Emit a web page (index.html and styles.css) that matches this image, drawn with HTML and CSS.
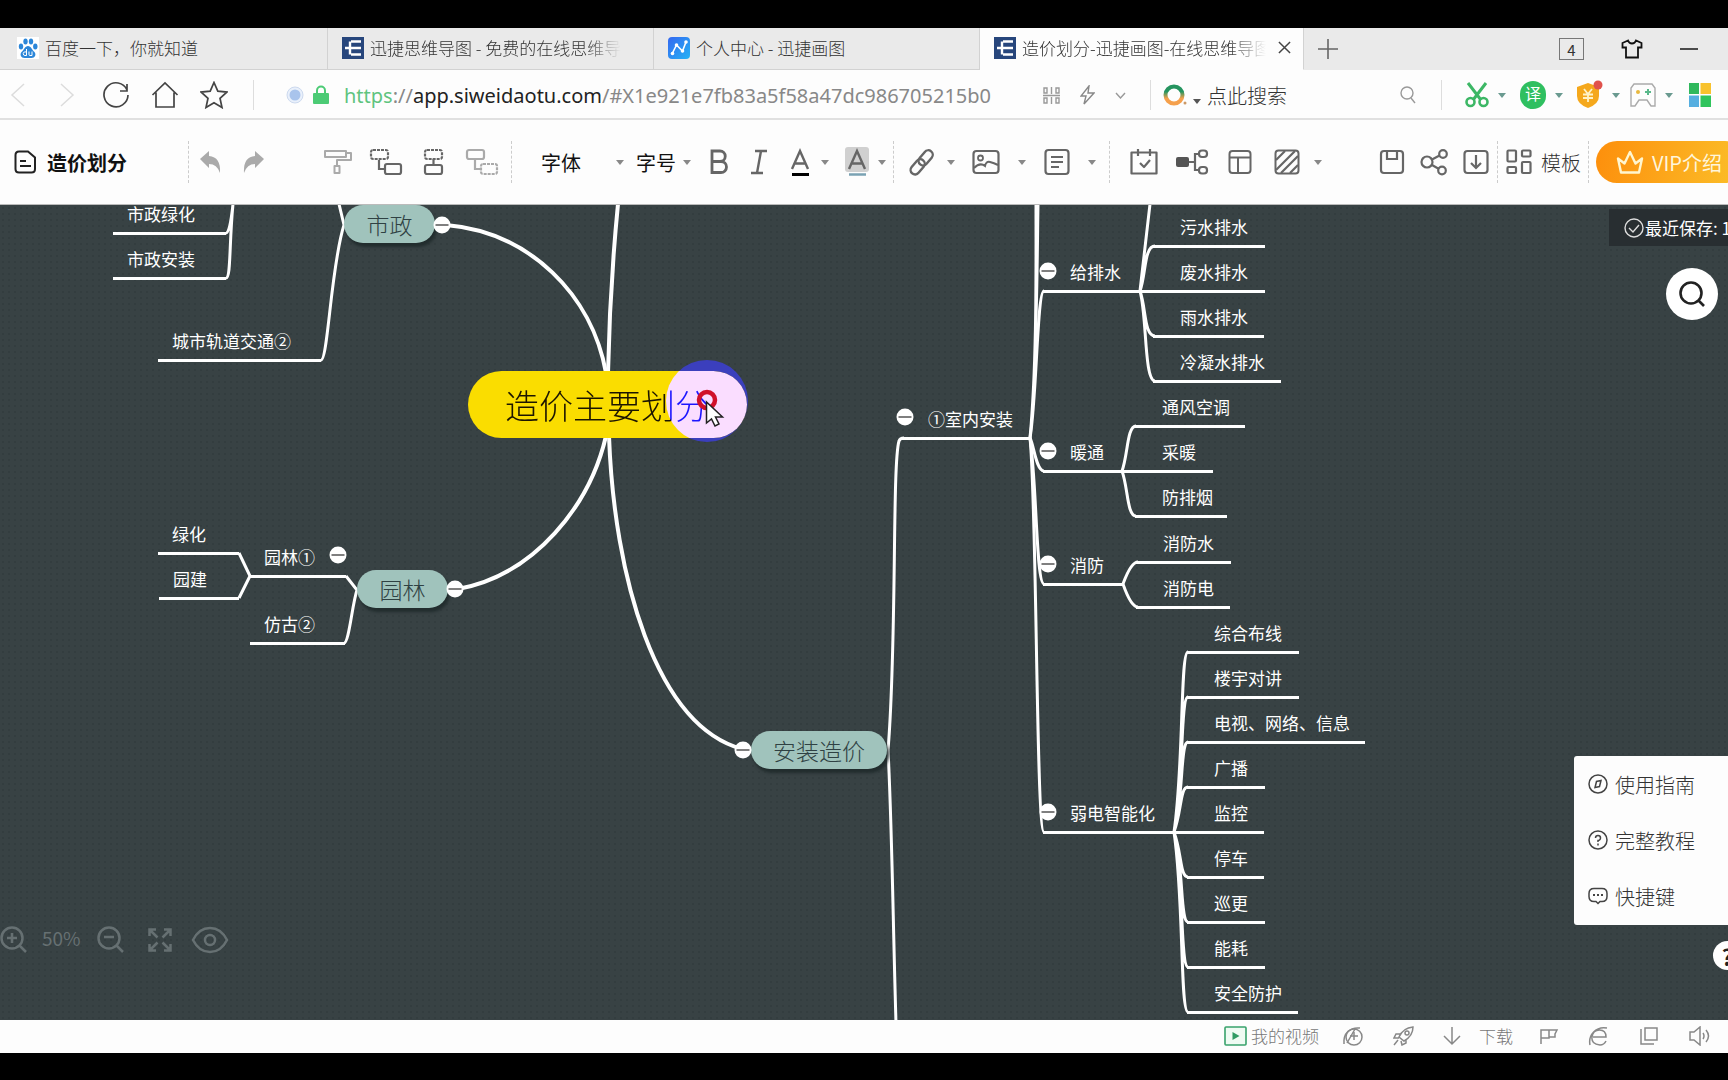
FILE: index.html
```html
<!DOCTYPE html>
<html lang="zh-CN">
<head>
<meta charset="utf-8">
<title>造价划分-迅捷画图-在线思维导图</title>
<link rel="stylesheet" href="styles.css">
</head>
<body>
<svg class="defs" aria-hidden="true">
  <symbol id="caret" viewBox="0 0 8 5"><path d="M0 0h8L4 5z" fill="currentColor"/></symbol>
  <symbol id="tree" viewBox="0 0 22 22"><rect width="22" height="22" fill="#27467c"/><path d="M9 4.500h10M3 11h16M9 17.500h10M8 4.500v13" stroke="#fff" stroke-width="2.400" fill="none"/></symbol>
  <symbol id="minus" viewBox="0 0 18 18"><circle cx="9" cy="9" r="8.500" fill="#fff"/><path d="M2.500 9h13" stroke="#555" stroke-width="1.500"/></symbol>
</svg>

<header class="tabs">
  <a class="tab" href="#baidu">
    <svg class="favicon" viewBox="0 0 22 22"><rect width="22" height="22" fill="#fff"/><g fill="#2b86d9"><ellipse cx="4" cy="9.500" rx="2.200" ry="3"/><ellipse cx="8.500" cy="4.500" rx="2.200" ry="3"/><ellipse cx="14" cy="4.500" rx="2.200" ry="3"/><ellipse cx="18.300" cy="9.500" rx="2.200" ry="3"/><path d="M11 9c3 0 4 4 6.500 6 2 2.500.500 6-3 6h-7c-3.500 0-5-3.500-3-6C7 13 8 9 11 9z"/></g><path d="M9.500 12v6.500H8a1.800 1.800 0 010-3.600h1.500M12 14.500v3q0 1 1 1h2v-4" stroke="#fff" fill="none"/></svg>
    <span class="tab-label">百度一下，你就知道</span>
  </a>
  <a class="tab" href="#mind"><svg class="favicon"><use href="#tree"/></svg><span class="tab-label fade">迅捷思维导图 - 免费的在线思维导图</span></a>
  <a class="tab" href="#center">
    <svg class="favicon" viewBox="0 0 22 22"><defs><linearGradient id="fg" x1="0" y1="0" x2="1" y2="1"><stop stop-color="#3568f0"/><stop offset="1" stop-color="#25b3f5"/></linearGradient></defs><rect width="22" height="22" rx="4" fill="url(#fg)"/><path d="M4 17l4.500-9 6 6L18 5" stroke="#fff" stroke-width="1.600" fill="none"/><g fill="#fff"><circle cx="4.500" cy="16.500" r="1.800"/><circle cx="8.500" cy="8" r="1.800"/><circle cx="14.500" cy="14" r="1.800"/><circle cx="18" cy="5" r="1.800"/></g></svg>
    <span class="tab-label">个人中心 - 迅捷画图</span>
  </a>
  <a class="tab active" href="#current"><svg class="favicon"><use href="#tree"/></svg><span class="tab-label fade">造价划分-迅捷画图-在线思维导图</span>
    <svg class="close" viewBox="0 0 14 14"><path d="M1 1l12 12M13 1L1 13" stroke="#444" stroke-width="1.600"/></svg></a>
  <button class="new-tab" aria-label="新标签"><svg width="20" height="20" viewBox="0 0 20 20"><path d="M10 0v20M0 10h20" stroke="#666" stroke-width="1.600"/></svg></button>
  <div class="window-tools">
    <button class="count">4</button>
    <button aria-label="皮肤"><svg width="22" height="20" viewBox="0 0 22 20"><path d="M7 1.500L1.500 4v4.500H5V18.500h12V8.500h3.500V4L15 1.500q-1 3-4 3t-4-3z" fill="none" stroke="#111" stroke-width="1.800"/></svg></button>
    <button aria-label="最小化"><svg width="18" height="4" viewBox="0 0 18 4"><path d="M0 2h18" stroke="#222" stroke-width="1.600"/></svg></button>
  </div>
</header>

<div class="address">
  <nav class="nav">
    <button aria-label="后退"><svg width="18" height="26" viewBox="0 0 18 26"><path d="M15 2L3 13l12 11" fill="none" stroke="#dcdcdc" stroke-width="1.500"/></svg></button>
    <button aria-label="前进"><svg width="18" height="26" viewBox="0 0 18 26"><path d="M3 2l12 11L3 24" fill="none" stroke="#dcdcdc" stroke-width="1.500"/></svg></button>
    <button aria-label="刷新"><svg width="28" height="28" viewBox="0 0 28 28"><path d="M25 9A12 12 0 1 0 26 14M25 3v7h-7" fill="none" stroke="#444" stroke-width="1.700"/></svg></button>
    <button aria-label="主页"><svg width="28" height="28" viewBox="0 0 28 28"><path d="M1.500 14L14 2l12.500 12M5 11.500V26h18V11.500" fill="none" stroke="#444" stroke-width="1.700"/></svg></button>
    <button aria-label="收藏"><svg width="28" height="28" viewBox="0 0 28 28"><path d="M14 1.500l3.800 8.700 9 .900-6.800 6.200 2 9.200-8-4.800-8 4.800 2-9.200L1.200 11.100l9-.900z" fill="none" stroke="#444" stroke-width="1.700"/></svg></button>
  </nav>
  <span class="rule"></span>
  <div class="url">
    <svg width="18" height="18" viewBox="0 0 18 18"><circle cx="9" cy="9" r="8" fill="#e9f0fb" stroke="#ccd9ee"/><circle cx="9" cy="9" r="5.500" fill="#a9c4ec"/></svg>
    <svg width="16" height="20" viewBox="0 0 16 20"><path d="M4 9V5.500a4 4 0 018 0V9" fill="none" stroke="#4ccb75" stroke-width="2"/><rect y="8" width="16" height="11" rx="1" fill="#4ccb75"/></svg>
    <span class="url-text"><span class="scheme">https</span>://<span class="host">app.siweidaotu.com</span>/#X1e921e7fb83a5f58a47dc986705215b0</span>
  </div>
  <div class="url-tools">
    <svg width="17" height="17" viewBox="0 0 17 17"><path d="M1 1h3v5H1zM8.500 0v7M13 1h3v5h-3zM0 8.500h17M1 11h3v5H1zM8.500 10v7M13 11h3v5h-3z" fill="none" stroke="#999" stroke-width="1.400"/></svg>
    <svg width="15" height="20" viewBox="0 0 15 20"><path d="M9 1L1 11h5l-2 8 10-11H8z" fill="none" stroke="#888" stroke-width="1.400"/></svg>
    <svg width="11" height="7" viewBox="0 0 11 7"><path d="M1 1l4.500 5L10 1" fill="none" stroke="#999" stroke-width="1.400"/></svg>
  </div>
  <span class="rule"></span>
  <form class="search">
    <svg width="24" height="22" viewBox="0 0 24 22"><defs><linearGradient id="lg" x2="0" y2="1"><stop offset=".3" stop-color="#25945f"/><stop offset=".7" stop-color="#f5a04c"/></linearGradient></defs><circle cx="11" cy="11" r="8.500" fill="none" stroke="url(#lg)" stroke-width="4"/><circle cx="22" cy="19" r="1.500" fill="#c96"/></svg>
    <svg class="caret low"><use href="#caret"/></svg>
    <input type="text" placeholder="点此搜索" aria-label="搜索">
    <svg width="16" height="18" viewBox="0 0 16 18"><circle cx="7" cy="7" r="6" fill="none" stroke="#999" stroke-width="1.400"/><path d="M11 12l4 5" stroke="#999" stroke-width="1.400"/></svg>
  </form>
  <span class="rule"></span>
  <div class="extensions">
    <button aria-label="截图"><svg width="24" height="26" viewBox="0 0 24 26"><path d="M3 1l13 17M21 1L8 18" stroke="#3cb765" stroke-width="3"/><circle cx="5.500" cy="20" r="4" fill="none" stroke="#3cb765" stroke-width="2.600"/><circle cx="18.500" cy="20" r="4" fill="none" stroke="#3cb765" stroke-width="2.600"/></svg><svg class="caret"><use href="#caret"/></svg></button>
    <button><span class="translate">译</span><svg class="caret"><use href="#caret"/></svg></button>
    <button aria-label="优惠"><svg width="28" height="30" viewBox="0 0 28 30"><path d="M13 3l11 4v9q0 8-11 12Q2 24 2 16V7z" fill="#f5a81c"/><path d="M9 9l4 5 4-5M8 14.500h10M8 18h10M13 14v8" stroke="#fff3c8" stroke-width="1.800" fill="none"/><circle cx="23" cy="5" r="4.500" fill="#e0524c"/></svg><svg class="caret"><use href="#caret"/></svg></button>
    <button aria-label="游戏"><svg width="26" height="24" viewBox="0 0 26 24"><path d="M4 1h18l3 4v18h-4l-4-6H9l-4 6H1V5z" fill="none" stroke="#aaa" stroke-width="1.400"/><circle cx="8" cy="9" r="2" fill="#e8b83e"/><path d="M18 6v6M15 9h6" stroke="#5ab88b" stroke-width="2"/></svg><svg class="caret"><use href="#caret"/></svg></button>
    <button aria-label="应用"><svg width="22" height="24" viewBox="0 0 22 24"><path fill="#2fb85c" d="M0 0h10v11H0z"/><path fill="#f8c22d" d="M11.500 0H22v11H11.500z"/><path fill="#55aee0" d="M0 12.500h10V24H0z"/><path fill="#2fc45c" d="M11.500 12.500H22V24H11.500z"/></svg></button>
  </div>
</div>

<div class="toolbar">
  <div class="group title">
    <svg width="23" height="24" viewBox="0 0 23 24"><path d="M5 1.500h9l7 6V19q0 3.500-3.500 3.500H5q-3.500 0-3.500-3.500V5Q1.500 1.500 5 1.500zM6 11h6M6 16h11" fill="none" stroke="#222" stroke-width="2"/></svg>
    <strong>造价划分</strong>
  </div>
  <div class="group history">
    <button aria-label="撤销"><svg width="24" height="24" viewBox="0 0 24 24"><path d="M1 9l9-8v5q12 1 11 17-3-9-11-9v4z" fill="#aaa"/></svg></button>
    <button aria-label="重做"><svg width="24" height="24" viewBox="0 0 24 24"><path d="M23 9l-9-8v5Q2 7 3 23q3-9 11-9v4z" fill="#aaa"/></svg></button>
  </div>
  <div class="group topics">
    <button aria-label="格式刷"><svg width="30" height="26" viewBox="0 0 30 26"><path d="M2 2h21v6H2zM23 4h5v7H14v5M11.500 17h5v7h-5z" fill="none" stroke="#aaa" stroke-width="2" stroke-linejoin="round"/></svg></button>
    <button aria-label="下级主题"><svg width="34" height="28" viewBox="0 0 34 28"><rect x="2" y="2" width="17" height="9" rx="2" fill="none" stroke="#666" stroke-width="2.200" stroke-dasharray="3 1"/><path d="M10 12v9h6" fill="none" stroke="#666" stroke-width="2.200"/><rect x="16" y="16" width="16" height="10" rx="2" fill="none" stroke="#666" stroke-width="2.200"/></svg></button>
    <button aria-label="同级主题"><svg width="22" height="28" viewBox="0 0 22 28"><rect x="2" y="2" width="17" height="9" rx="2" fill="none" stroke="#666" stroke-width="2.200" stroke-dasharray="3 1"/><path d="M10.500 11v6" stroke="#666" stroke-width="2.200"/><rect x="2" y="17" width="17" height="9" rx="2" fill="none" stroke="#666" stroke-width="2.200"/></svg></button>
    <button aria-label="上级主题"><svg width="34" height="28" viewBox="0 0 34 28"><rect x="2" y="2" width="17" height="9" rx="2" fill="none" stroke="#aaa" stroke-width="2.200"/><path d="M10 12v9h6" fill="none" stroke="#aaa" stroke-width="2.200"/><rect x="16" y="16" width="16" height="10" rx="2" fill="none" stroke="#aaa" stroke-width="2.200" stroke-dasharray="3 1"/></svg></button>
  </div>
  <div class="group type">
    <label class="pick font"><select aria-label="字体"><option>字体</option></select><svg class="caret"><use href="#caret"/></svg></label>
    <label class="pick"><select aria-label="字号"><option>字号</option></select><svg class="caret"><use href="#caret"/></svg></label>
    <button class="narrow" aria-label="加粗"><svg width="20" height="26" viewBox="0 0 20 26"><path d="M3 2h8a5 5 0 010 10.500H3zM3 12.500h9a5.500 5.500 0 010 11H3z" fill="none" stroke="#666" stroke-width="2.800"/></svg></button>
    <button class="narrow" aria-label="斜体"><svg width="18" height="26" viewBox="0 0 18 26"><path d="M5 2h12M1 24h12M11 2L7 24" fill="none" stroke="#666" stroke-width="2.400"/></svg></button>
    <button class="split" aria-label="文字颜色"><svg class="glyph" viewBox="0 0 26 30"><path d="M5 22L13 4l8 18M8 16.500h10" fill="none" stroke="#666" stroke-width="2.400"/><path d="M5 27.500h17" stroke="#000" stroke-width="3"/></svg><svg class="caret"><use href="#caret"/></svg></button>
    <button class="split" aria-label="背景颜色"><svg class="glyph" viewBox="0 0 26 30"><rect x="1" width="24" height="25" rx="3" fill="#d0d0d0"/><path d="M5 22L13 4l8 18M8 16.500h10" fill="none" stroke="#666" stroke-width="2.400"/><path d="M5 27.500h17" stroke="#7aa2b3" stroke-width="2.500"/></svg><svg class="caret"><use href="#caret"/></svg></button>
  </div>
  <div class="group insert">
    <button class="split" aria-label="链接"><svg width="28" height="28" viewBox="0 0 28 28"><g fill="none" stroke="#666" stroke-width="2.400"><rect x="9" y="5" width="17" height="9" rx="4.500" transform="rotate(-50 18 9.500)"/><rect x="1" y="14" width="17" height="9" rx="4.500" transform="rotate(-50 10 18.500)"/></g></svg><svg class="caret"><use href="#caret"/></svg></button>
    <button class="split wide" aria-label="图片"><svg width="28" height="26" viewBox="0 0 28 26"><rect x="1.500" y="2" width="25" height="22" rx="3" fill="none" stroke="#666" stroke-width="2.200"/><circle cx="8.500" cy="9" r="2.500" fill="none" stroke="#666" stroke-width="1.800"/><path d="M2 19q6-6 11-2 1-5 5-4t8 3" fill="none" stroke="#666" stroke-width="2"/></svg><svg class="caret"><use href="#caret"/></svg></button>
    <button class="split wide" aria-label="备注"><svg width="26" height="28" viewBox="0 0 26 28"><rect x="1.500" y="2" width="23" height="24" rx="3" fill="none" stroke="#666" stroke-width="2.200"/><path d="M7 9h12M7 14h12M7 19h8" stroke="#666" stroke-width="2.200"/></svg><svg class="caret"><use href="#caret"/></svg></button>
  </div>
  <div class="group extra">
    <button aria-label="任务"><svg width="28" height="28" viewBox="0 0 28 28"><path d="M1.500 4.500h25v21h-25zM8 1v7M20 1v7M10 15l4 4 6-7" fill="none" stroke="#666" stroke-width="2.200" stroke-linejoin="round"/></svg></button>
    <button aria-label="概要"><svg width="34" height="28" viewBox="0 0 34 28"><rect x="1" y="9" width="13" height="10" rx="2" fill="#555"/><path d="M14 14h6M24 6h-4v16h4" fill="none" stroke="#666" stroke-width="2.200"/><rect x="24" y="2.500" width="8" height="6.500" rx="3" fill="none" stroke="#666" stroke-width="2.200"/><rect x="24" y="19" width="8" height="6.500" rx="3" fill="none" stroke="#666" stroke-width="2.200"/></svg></button>
    <button aria-label="布局"><svg width="24" height="26" viewBox="0 0 24 26"><rect x="1.500" y="2" width="21" height="22" rx="3" fill="none" stroke="#666" stroke-width="2"/><path d="M2 8.500h20M10 9v15" stroke="#666" stroke-width="2"/></svg></button>
    <button class="split hatch" aria-label="样式"><svg width="26" height="26" viewBox="0 0 26 26"><rect x="1.500" y="1.500" width="23" height="23" rx="3" fill="none" stroke="#666" stroke-width="2"/><path d="M2 11L11 2M2 21L21 2M7 24L24 7M16 24l8-8" stroke="#666" stroke-width="2.200"/></svg><svg class="caret"><use href="#caret"/></svg></button>
  </div>
  <div class="group file">
    <button aria-label="保存"><svg width="26" height="28" viewBox="0 0 26 28"><rect x="2" y="3" width="22" height="22" rx="3" fill="none" stroke="#666" stroke-width="2.200"/><path d="M8 3v8h10V3" fill="none" stroke="#666" stroke-width="2.200"/></svg></button>
    <button aria-label="分享"><svg width="28" height="28" viewBox="0 0 28 28"><g fill="none" stroke="#666" stroke-width="2.200"><circle cx="7" cy="14" r="5.500"/><circle cx="23" cy="6" r="3.800"/><circle cx="22" cy="22.500" r="3.800"/><path d="M12 11.500l7.500-4M12 17l7 4"/></g></svg></button>
    <button aria-label="下载"><svg width="26" height="28" viewBox="0 0 26 28"><rect x="1.500" y="3" width="23" height="22" rx="3" fill="none" stroke="#666" stroke-width="2.200"/><path d="M13 7v13M8 15l5 5 5-5" fill="none" stroke="#666" stroke-width="2.200"/></svg></button>
  </div>
  <button class="template"><svg width="26" height="26" viewBox="0 0 26 26"><g fill="none" stroke="#666" stroke-width="2.200"><rect x="1.500" y="1.500" width="8.500" height="11" rx="1"/><rect x="16" y="1.500" width="8.500" height="6" rx="1"/><rect x="1.500" y="18" width="8.500" height="6" rx="1"/><rect x="16" y="13" width="8.500" height="11" rx="1"/></g></svg>模板</button>
  <button class="vip"><svg width="28" height="26" viewBox="0 0 28 26"><path d="M5 23.500h18l3-14-6.500 5L14 3 8.500 14.500 2 9.500z" fill="none" stroke="#fff6d0" stroke-width="2.400" stroke-linejoin="round"/></svg>VIP介绍</button>
</div>

<main class="canvas">
  <svg class="links" width="1400" height="820" aria-hidden="true">
    <g class="thick">
      <path d="M446 20C530 27 592 90 606 168"/>
      <path d="M618-1C612 60 609 120 608 168"/>
      <path d="M606 231C590 300 535 370 458 384"/>
      <path d="M609 231C614 370 655 520 742 544"/>
    </g>
    <g class="thin">
      <path d="M226 28Q230 28 233-1M226 73C231 73 229 40 233-1"/>
      <path d="M321 155C328 155 331 60 344 20L339-1"/>
      <path d="M239 348L250 371L239 393"/>
      <path d="M346 371L357 385C352 400 349 438 344 438"/>
      <path d="M888 545C897 440 892 260 899 236Q900 233 904 233"/>
      <path d="M888 545C892 620 893 720 896 818"/>
      <path d="M1030 233C1037 160 1036 60 1036-1M1030 233C1037 160 1037 60 1038-1"/>
      <path d="M1030 233C1037 190 1037 86 1044 86"/>
      <path d="M1030 233C1034 240 1036 266 1044 266"/>
      <path d="M1030 233C1037 280 1036 379 1044 379"/>
      <path d="M1030 233C1037 300 1036 627 1044 627"/>
      <path d="M1140 86C1146 70 1144 41 1155 41M1140 86L1150-1M1140 86C1146 102 1144 131 1155 131M1140 86C1147 110 1144 176 1155 176"/>
      <path d="M1122 266C1128 250 1127 221 1136 221M1122 266C1128 282 1127 311 1136 311"/>
      <path d="M1123 379Q1131 357 1138 357M1123 379Q1131 402 1138 402"/>
      <path d="M1174 627C1184 560 1180 447 1188 447M1174 627C1184 580 1180 492 1188 492M1174 627C1184 590 1180 537 1188 537M1174 627C1182 605 1180 582 1188 582M1174 627C1182 649 1180 672 1188 672M1174 627C1184 664 1180 717 1188 717M1174 627C1184 674 1180 762 1188 762M1174 627C1184 694 1180 807 1188 807"/>
    </g>
  </svg>

  <div class="node left" style="left:113px;top:-2px;width:113px">市政绿化</div>
  <div class="node left" style="left:113px;top:43px;width:113px">市政安装</div>
  <div class="node left" style="left:158px;top:125px;width:163px">城市轨道交通②</div>
  <div class="node left" style="left:158px;top:318px;width:81px">绿化</div>
  <div class="node left" style="left:159px;top:363px;width:80px">园建</div>
  <div class="node left" style="left:250px;top:341px;width:96px">园林①</div>
  <div class="node left" style="left:250px;top:408px;width:95px">仿古②</div>

  <div class="node" style="left:901px;top:203px;width:130px">①室内安装</div>
  <div class="node" style="left:1043px;top:56px;width:98px">给排水</div>
  <div class="node" style="left:1043px;top:236px;width:80px">暖通</div>
  <div class="node" style="left:1043px;top:349px;width:80px">消防</div>
  <div class="node" style="left:1043px;top:597px;width:132px">弱电智能化</div>
  <div class="node" style="left:1153px;top:11px;width:112px">污水排水</div>
  <div class="node from-joint" style="left:1140px;top:56px;width:125px">废水排水</div>
  <div class="node" style="left:1153px;top:101px;width:111px">雨水排水</div>
  <div class="node" style="left:1153px;top:146px;width:128px">冷凝水排水</div>
  <div class="node" style="left:1135px;top:191px;width:110px">通风空调</div>
  <div class="node from-joint" style="left:1122px;top:236px;width:91px">采暖</div>
  <div class="node" style="left:1135px;top:281px;width:92px">防排烟</div>
  <div class="node" style="left:1136px;top:327px;width:95px">消防水</div>
  <div class="node" style="left:1136px;top:372px;width:94px">消防电</div>
  <div class="node" style="left:1187px;top:417px;width:112px">综合布线</div>
  <div class="node" style="left:1187px;top:462px;width:112px">楼宇对讲</div>
  <div class="node" style="left:1187px;top:507px;width:178px">电视、网络、信息</div>
  <div class="node" style="left:1187px;top:552px;width:78px">广播</div>
  <div class="node from-joint" style="left:1174px;top:597px;width:90px">监控</div>
  <div class="node" style="left:1187px;top:642px;width:77px">停车</div>
  <div class="node" style="left:1187px;top:687px;width:78px">巡更</div>
  <div class="node" style="left:1187px;top:732px;width:78px">能耗</div>
  <div class="node" style="left:1187px;top:777px;width:111px">安全防护</div>

  <div class="pill" style="left:344px;top:0;width:91px">市政</div>
  <div class="pill" style="left:357px;top:365px;width:91px">园林</div>
  <div class="pill" style="left:751px;top:526px;width:136px">安装造价</div>

  <div class="halo"></div>
  <div class="root">造价主要划分<span class="tint"></span></div>
  <svg class="pointer" viewBox="0 0 30 44"><circle cx="12" cy="12" r="8" fill="none" stroke="#d0102a" stroke-width="4.500"/><path d="M11.500 14v21l5-4 3.500 7 4-2-3.500-7h7z" fill="#fff" stroke="#222" stroke-width="1.500"/></svg>

  <button class="fold" style="left:433px;top:11px" aria-label="收起"><svg><use href="#minus"/></svg></button>
  <button class="fold" style="left:446px;top:375px" aria-label="收起"><svg><use href="#minus"/></svg></button>
  <button class="fold" style="left:734px;top:536px" aria-label="收起"><svg><use href="#minus"/></svg></button>
  <button class="fold" style="left:329px;top:341px" aria-label="收起"><svg><use href="#minus"/></svg></button>
  <button class="fold" style="left:896px;top:203px" aria-label="收起"><svg><use href="#minus"/></svg></button>
  <button class="fold" style="left:1039px;top:57px" aria-label="收起"><svg><use href="#minus"/></svg></button>
  <button class="fold" style="left:1039px;top:237px" aria-label="收起"><svg><use href="#minus"/></svg></button>
  <button class="fold" style="left:1039px;top:350px" aria-label="收起"><svg><use href="#minus"/></svg></button>
  <button class="fold" style="left:1039px;top:598px" aria-label="收起"><svg><use href="#minus"/></svg></button>

  <div class="saved"><svg width="20" height="20" viewBox="0 0 20 20"><circle cx="10" cy="10" r="9" fill="none" stroke="#ddd" stroke-width="1.400"/><path d="M5 10l4 4 6-7" fill="none" stroke="#ddd" stroke-width="1.400"/></svg>最近保存: 1</div>
  <button class="find" aria-label="查找"><svg width="28" height="28" viewBox="0 0 28 28"><circle cx="13" cy="13" r="10.500" fill="none" stroke="#222" stroke-width="2.600"/><path d="M20 20l6 6" stroke="#222" stroke-width="2.600"/></svg></button>

  <ul class="help-menu">
    <li><a href="#guide"><svg width="20" height="20" viewBox="0 0 20 20"><circle cx="10" cy="10" r="9" fill="none" stroke="#444" stroke-width="1.500"/><path d="M13 6.500l-1.500 6-4.500 1 1.500-6z" fill="none" stroke="#444" stroke-width="1.500"/></svg>使用指南</a></li>
    <li><a href="#course"><svg width="20" height="20" viewBox="0 0 20 20"><circle cx="10" cy="10" r="9" fill="none" stroke="#444" stroke-width="1.500"/><path d="M7.500 8a2.500 2.500 0 112.500 2.500V12M10 13.500v2" fill="none" stroke="#444" stroke-width="1.500"/></svg>完整教程</a></li>
    <li><a href="#keys"><svg width="20" height="20" viewBox="0 0 20 20"><path d="M6 2.500h8q5 0 5 5v3q0 5-5 5h-2l-2 2-2-2H6q-5 0-5-5v-3q0-5 5-5z" fill="none" stroke="#444" stroke-width="1.500"/><path d="M5 9h2M9 9h2M13 9h2" stroke="#444" stroke-width="2"/></svg>快捷键</a></li>
  </ul>
  <button class="help">?</button>

  <div class="zoom">
    <button aria-label="放大"><svg width="28" height="28" viewBox="0 0 28 28"><circle cx="12" cy="12" r="10.500"/><path d="M7 12h10M12 7v10M19 19l7 7"/></svg></button>
    <span>50%</span>
    <button aria-label="缩小"><svg width="28" height="28" viewBox="0 0 28 28"><circle cx="12" cy="12" r="10.500"/><path d="M7 11h10M19 19l7 7"/></svg></button>
    <button aria-label="全屏"><svg width="24" height="24" viewBox="0 0 24 24"><path d="M1.500 8V1.500H8M16 1.500h6.500V8M22.500 16v6.500H16M8 22.500H1.500V16M2 2l7.500 7.500M22 2l-7.500 7.500M22 22l-7.500-7.500M2 22l7.500-7.500"/></svg></button>
    <button aria-label="预览"><svg width="38" height="28" viewBox="0 0 38 28"><path d="M2 14Q8 2 19 2t17 12q-6 12-17 12T2 14z"/><circle cx="19" cy="14" r="5"/></svg></button>
  </div>
</main>

<footer class="status">
  <button class="video"><svg width="23" height="20" viewBox="0 0 23 20"><rect x="1" y="1" width="21" height="18" rx="1" fill="#effbf3" stroke="#39a26c" stroke-width="1.600"/><path d="M8.500 6v8l7-4z" fill="#2f9b63" stroke="none"/></svg>我的视频</button>
  <button aria-label="加速"><svg width="22" height="20" viewBox="0 0 22 20"><path d="M2 18C1 7 8 1 18 2M5 17L13 3"/><circle cx="12" cy="11" r="8"/><path d="M8 10h8M12 6v8"/></svg></button>
  <button aria-label="火箭"><svg width="22" height="20" viewBox="0 0 22 20"><path d="M6 11Q10 2 20 1q0 9-9 14zM8 8H3l-2 4h5M13 14v3l-4 2-1-4M5 14l-4 5"/><circle cx="14" cy="7" r="2"/></svg></button>
  <button class="download"><svg width="20" height="20" viewBox="0 0 20 20"><path d="M10 1v17M2 10l8 8 8-8"/></svg>下载</button>
  <button aria-label="标记"><svg width="20" height="18" viewBox="0 0 20 18"><path d="M2 17V3h8v8H2M10 3h8l-2 4v3h-6"/></svg></button>
  <button aria-label="浏览器模式"><svg width="22" height="20" viewBox="0 0 22 20"><path d="M5 11h13q0-7-6.500-7T4 11t8 8q4 0 6-4M2 19C0 9 8 0 19 2"/></svg></button>
  <button aria-label="窗口"><svg width="20" height="20" viewBox="0 0 20 20"><path d="M6 2h12v12H6zM2 3v15h13"/></svg></button>
  <button aria-label="声音"><svg width="24" height="20" viewBox="0 0 24 20"><path d="M2 6h4l6-5v18l-6-5H2zM15 7q2 3 0 6M18 4q5 6 0 12"/></svg></button>
</footer>
</body>
</html>
```
FILE: styles.css
```css
* { box-sizing: border-box; }

body {
  margin: 0;
  padding: 28px 0 27px;
  min-height: 100vh;
  display: flex;
  flex-direction: column;
  overflow: hidden;
  background: #000;
  color: #333;
  font-family: "Noto Sans", "Noto Sans CJK SC", sans-serif;
  font-size: 17px;
}

button {
  flex: none;
  display: flex;
  align-items: center;
  justify-content: center;
  padding: 0;
  border: 0;
  background: none;
  color: inherit;
  font: inherit;
  white-space: nowrap;
}

svg { flex: none; display: block; }
a { color: inherit; text-decoration: none; }
.defs { position: absolute; width: 0; height: 0; }
.caret { width: 8px; height: 5px; color: #888; }

/* Browser tabs */
.tabs {
  height: 42px;
  display: flex;
  background: #eaeaea;
  font-family: "Noto Sans CJK SC", sans-serif;
}
.tab {
  flex: 0 1 326px;
  min-width: 0;
  display: flex;
  align-items: center;
  gap: 6px;
  padding: 0 32px 2px 14px;
  border-right: 1px solid #d2d2d2;
  border-bottom: 1px solid #d2d2d2;
  font-weight: 300;
}
.tab:first-child { flex-basis: 328px; padding-left: 17px; }
.tab.active { flex-basis: 324px; padding-right: 12px; border-bottom-color: #fdfdfd; background: #fdfdfd; }
.favicon { width: 22px; height: 22px; }
.tab-label { flex: 1; overflow: hidden; white-space: nowrap; line-height: 24px; }
.fade { -webkit-mask-image: linear-gradient(to left, transparent, #000 36px); mask-image: linear-gradient(to left, transparent, #000 36px); }
.close { width: 13px; height: 13px; margin-left: 6px; }
.new-tab { width: 48px; }
.window-tools {
  margin-left: auto;
  padding-right: 30px;
  display: flex;
  align-items: center;
  gap: 37px;
}
.count { width: 25px; height: 22px; border: 1px solid #777; font-size: 15px; }

/* Address row */
.address {
  height: 50px;
  display: flex;
  align-items: center;
  padding-top: 2px;
  border-bottom: 2px solid #e0e0e0;
  background: #fdfdfd;
}
.nav { display: flex; margin-left: -7px; }
.nav button { width: 49px; }
.rule { flex: none; width: 1px; height: 30px; background: #ddd; }
.nav + .rule { margin-left: 15px; }
.url { flex: 1; min-width: 0; display: flex; align-items: center; padding-left: 32px; }
.url svg + svg { margin-left: 9px; }
.url-text { margin-left: 15px; font-family: "Noto Sans", sans-serif; font-size: 20px; color: #888; white-space: nowrap; }
.scheme { color: #5fc47f; }
.host { color: #222; }
.url-tools { display: flex; align-items: center; gap: 20px; padding-right: 24px; }
.search { width: 290px; display: flex; align-items: center; padding: 0 25px 0 12px; }
.search .low { margin: 12px 6px 0 6px; color: #555; }
.search input {
  flex: 1;
  min-width: 0;
  padding: 0;
  border: 0;
  background: none;
  font: 300 20px "Noto Sans CJK SC", sans-serif;
}
.search input::placeholder { color: #333; opacity: 1; }
.extensions { display: flex; align-items: center; padding: 0 17px 0 23px; }
.extensions button { width: 55px; justify-content: flex-start; gap: 9px; }
.extensions button:last-child { width: 22px; margin-left: 4px; }
.extensions .caret { color: #6a9a90; }
.translate { width: 26px; height: 28px; border-radius: 14px; background: #2fbf60; color: #fff; font-size: 16px; line-height: 26px; text-align: center; }

/* Editor toolbar */
.toolbar {
  height: 85px;
  display: flex;
  align-items: center;
  overflow: hidden;
  border-bottom: 1px solid #bbb;
  background: #fdfdfd;
  font-family: "Noto Sans CJK SC", sans-serif;
  font-size: 20px;
}
.group { flex: none; height: 42px; display: flex; align-items: center; }
.title { width: 189px; gap: 10px; padding-left: 14px; border-right: 1px dashed #ccc; }
.title strong { color: #111; font-weight: 700; }
.history { padding-left: 1px; }
.history button { width: 42px; }
.topics { margin-left: 40px; padding-right: 5px; border-right: 1px dashed #ccc; }
.topics button { width: 48px; }
.type { width: 382px; padding-left: 29px; border-right: 1px dashed #ccc; }
.pick { display: flex; align-items: center; gap: 5px; margin-right: 8px; }
.pick select { width: 42px; padding: 0; border: 0; background: none; appearance: none; color: #111; font: inherit; }
.pick.font { gap: 33px; margin-right: 12px; }
.narrow { width: 40px; }
.split { width: 57px; gap: 8px; justify-content: flex-start; padding-left: 8px; }
.glyph { width: 26px; height: 30px; }
.insert { width: 216px; padding-left: 6px; border-right: 1px dashed #ccc; }
.insert .split { width: 64px; gap: 11px; }
.insert .wide { width: 72px; gap: 18px; }
.extra { padding-left: 10px; }
.extra button { width: 48px; }
.extra .hatch { width: 60px; gap: 14px; padding-left: 10px; }
.file { margin-left: 47px; border-right: 1px dashed #ccc; }
.file button { width: 42px; }
.template { height: 42px; gap: 9px; padding: 0 7px 0 8px; border-right: 1px dashed #ccc; font-weight: 300; }
.vip {
  height: 42px;
  margin-left: 7px;
  padding: 0 24px 0 20px;
  gap: 8px;
  border-radius: 21px;
  background: linear-gradient(100deg, #fd8f0c, #fbc02a);
  color: #fff6dc;
}

/* Mind map */
.canvas {
  position: relative;
  flex: 1;
  min-height: 400px;
  overflow: hidden;
  background: #384244 radial-gradient(circle, #333d3f 1px, transparent 1px) 0 0 / 6px 6px;
  font-family: "Noto Sans CJK SC", sans-serif;
}
.links { position: absolute; left: 0; top: 0; fill: none; stroke: #fff; }
.thick { stroke-width: 4px; }
.thin { stroke-width: 3px; }
.node {
  position: absolute;
  height: 32px;
  padding-left: 27px;
  border-bottom: 3px solid #fff;
  color: #fff;
  line-height: 22px;
  white-space: nowrap;
}
.node.left { padding-left: 14px; }
.node.from-joint { padding-left: 40px; }
.pill {
  position: absolute;
  height: 38px;
  border-radius: 19px;
  background: #a0c3bc;
  box-shadow: 2px 4px 3px #222d2e;
  color: #2f4143;
  font-size: 23px;
  font-weight: 300;
  line-height: 38px;
  text-align: center;
}
.root {
  position: absolute;
  left: 468px;
  top: 166px;
  width: 279px;
  height: 67px;
  padding-left: 37px;
  overflow: hidden;
  isolation: isolate;
  border-radius: 34px;
  background: #fadd00;
  color: #1c1500;
  font-size: 34px;
  font-weight: 300;
  line-height: 67px;
}
.halo { position: absolute; left: 666px; top: 155px; width: 82px; height: 82px; border-radius: 50%; background: #3b3fbd; }
.tint { position: absolute; left: 198px; top: -11px; width: 82px; height: 82px; border-radius: 50%; background: #00f; mix-blend-mode: screen; }
.pointer { position: absolute; left: 695px; top: 183px; width: 30px; height: 44px; }
.fold { position: absolute; width: 18px; height: 18px; }
.fold svg { width: 18px; height: 18px; }

/* Floating controls */
.saved {
  position: absolute;
  top: 4px;
  right: 0;
  width: 119px;
  height: 37px;
  padding-left: 15px;
  display: flex;
  align-items: center;
  gap: 1px;
  overflow: hidden;
  background: #282e31;
  color: #fff;
  white-space: nowrap;
}
.find { position: absolute; top: 63px; right: 10px; width: 52px; height: 52px; border-radius: 50%; background: #fff; }
.help-menu {
  position: absolute;
  right: 0;
  bottom: 95px;
  width: 154px;
  margin: 0;
  padding: 0 0 1px 14px;
  border-radius: 3px 0 0 3px;
  background: #fdfdfd;
  list-style: none;
  font-size: 20px;
  font-weight: 300;
}
.help-menu a { height: 56px; display: flex; align-items: center; gap: 7px; }
.help { position: absolute; right: -14px; bottom: 50px; width: 29px; height: 29px; border-radius: 50%; background: #fff; color: #222; font-size: 22px; font-weight: 700; }
.zoom {
  position: absolute;
  left: 0;
  bottom: 66px;
  display: flex;
  align-items: center;
  color: #667072;
  font-size: 19px;
  line-height: 24px;
}
.zoom svg { fill: none; stroke: #667072; stroke-width: 2.500px; }
.zoom span { width: 40px; margin: 0 15px 0 14px; padding-bottom: 4px; }
.zoom button + button { margin-left: 23px; }
.zoom button:last-child { margin-left: 19px; }

/* Status bar */
.status {
  height: 33px;
  display: flex;
  align-items: center;
  justify-content: flex-end;
  gap: 29px;
  padding: 0 16px 2px 0;
  background: #fdfdfd;
  color: #777;
  font-family: "Noto Sans CJK SC", sans-serif;
  font-weight: 300;
}
.status svg { fill: none; stroke: #888; stroke-width: 1.500px; }
.status .video { gap: 4px; margin-right: -6px; }
.status .download { gap: 17px; margin: 0 -3px 0 -2px; }
```
